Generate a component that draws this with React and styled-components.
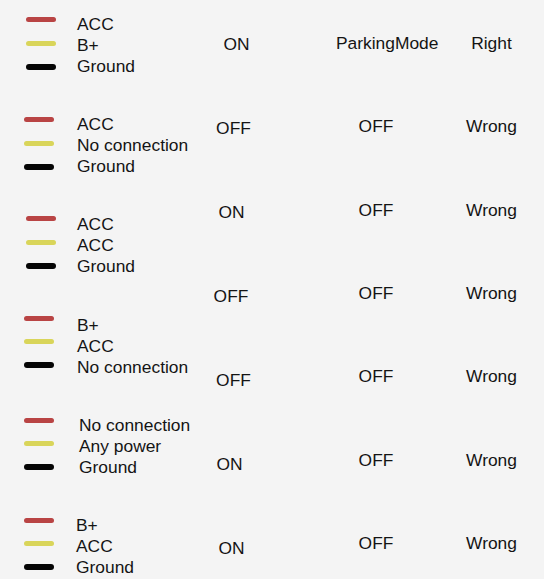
import React from "react";
import styled, { createGlobalStyle } from "styled-components";

const Global = createGlobalStyle`
  html, body { margin: 0; padding: 0; background: #f4f4f4; }
  body { overflow: hidden; }
  #root { width: 544px; height: 579px; }
`;

const Page = styled.div`
  display: flex;
  align-items: flex-start;
  width: 544px;
  height: 579px;
  overflow: hidden;
  background: #f4f4f4;
  font-family: "Liberation Sans", Arial, sans-serif;
  font-size: 17.4px;
  line-height: 21px;
  color: #141414;
`;

const WireList = styled.div`
  width: 200px;
  flex-shrink: 0;
  padding-top: 14px;
  display: flex;
  flex-direction: column;
  gap: 37.2px;
`;

const Group = styled.div`
  display: flex;
  align-items: flex-start;
  flex-shrink: 0;
  padding-left: ${(p) => p.$wx}px;
`;

const Wires = styled.div`
  width: 31px;
  padding-top: ${(p) => p.$wy}px;
  display: flex;
  flex-direction: column;
  gap: 18.5px;
`;

const Wire = styled.div`
  width: 30px;
  height: ${(p) => (p.$color === "black" ? 6 : 5)}px;
  border-radius: 3px;
  background: ${(p) =>
    p.$color === "red" ? "#b94444" : p.$color === "yellow" ? "#d9d55a" : "#050505"};
  margin-top: ${(p) => (p.$color === "black" ? -0.5 : 0)}px;
`;

const Labels = styled.div`
  display: flex;
  flex-direction: column;
  margin-left: ${(p) => p.$tx}px;
  white-space: nowrap;
`;

const Column = styled.div`
  width: ${(p) => p.$w}px;
  flex-shrink: 0;
  margin-left: ${(p) => p.$ml}px;
  padding-top: ${(p) => p.$pt}px;
  display: flex;
  flex-direction: column;
`;

const Cell = styled.div`
  height: ${(p) => p.$h}px;
  flex-shrink: 0;
  text-align: center;
  white-space: nowrap;
  padding-left: ${(p) => Math.max(0, (p.$dx || 0) * 2)}px;
  padding-right: ${(p) => Math.max(0, -(p.$dx || 0) * 2)}px;
`;

const groups = [
  { wx: 26, wy: 3, tx: 20, labels: ["ACC", "B+", "Ground"] },
  { wx: 24, wy: 3, tx: 22, labels: ["ACC", "No connection", "Ground"] },
  { wx: 26, wy: 2, tx: 20, labels: ["ACC", "ACC", "Ground"] },
  { wx: 24, wy: 1, tx: 22, labels: ["B+", "ACC", "No connection"] },
  { wx: 24, wy: 3, tx: 24, labels: ["No connection", "Any power", "Ground"] },
  { wx: 24, wy: 3, tx: 21, labels: ["B+", "ACC", "Ground"] },
];

const status = [
  { t: "ON", dx: 4.5 },
  { t: "OFF", dx: 1.5 },
  { t: "ON", dx: -0.5 },
  { t: "OFF", dx: -1 },
  { t: "OFF", dx: 1.5 },
  { t: "ON", dx: -2.5 },
  { t: "ON", dx: -0.5 },
];

const modes = [
  { t: "ParkingMode", dx: 10 },
  { t: "OFF" },
  { t: "OFF" },
  { t: "OFF" },
  { t: "OFF" },
  { t: "OFF" },
  { t: "OFF" },
];

const results = ["Right", "Wrong", "Wrong", "Wrong", "Wrong", "Wrong", "Wrong"];

export default function App() {
  return (
    <>
      <Global />
      <Page>
        <WireList>
          {groups.map((g, i) => (
            <Group key={i} $wx={g.wx}>
              <Wires $wy={g.wy}>
                <Wire $color="red" />
                <Wire $color="yellow" />
                <Wire $color="black" />
              </Wires>
              <Labels $tx={g.tx}>
                {g.labels.map((l, j) => (
                  <span key={j}>{l}</span>
                ))}
              </Labels>
            </Group>
          ))}
        </WireList>
        <Column $w={64} $ml={0} $pt={34}>
          {status.map((s, i) => (
            <Cell key={i} $h={84} $dx={s.dx}>
              {s.t}
            </Cell>
          ))}
        </Column>
        <Column $w={120} $ml={52} $pt={33}>
          {modes.map((m, i) => (
            <Cell key={i} $h={83.33} $dx={m.dx}>
              {m.t}
            </Cell>
          ))}
        </Column>
        <Column $w={80} $ml={15.5} $pt={33}>
          {results.map((r, i) => (
            <Cell key={i} $h={83.33}>
              {r}
            </Cell>
          ))}
        </Column>
      </Page>
    </>
  );
}
